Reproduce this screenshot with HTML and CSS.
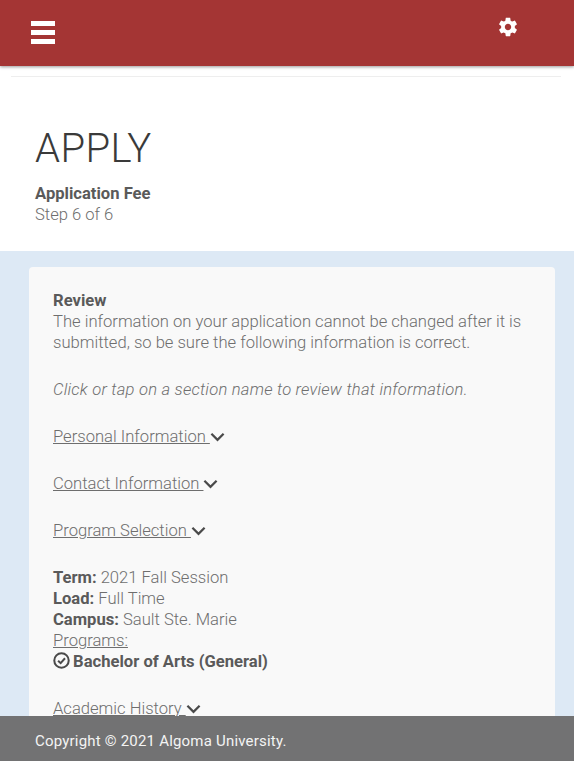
FILE: index.html
```html
<!DOCTYPE html>
<html lang="en">
<head>
    <meta charset="UTF-8">
    <meta name="viewport" content="width=device-width, initial-scale=1.0">
    <title>Apply - Application Fee</title>
    <link rel="stylesheet" href="styles.css">
</head>
<body>
    <header class="topbar">
        <a class="menu-btn" href="#" aria-label="Menu">
            <span></span><span></span><span></span>
        </a>
        <a class="settings-btn" href="#" aria-label="Settings">
            <svg viewBox="0 0 24 24" width="22" height="22"><path fill="#fff" d="M19.43 12.98c.04-.32.07-.64.07-.98s-.03-.66-.07-.98l2.11-1.65c.19-.15.24-.42.12-.64l-2-3.46c-.12-.22-.39-.3-.61-.22l-2.49 1c-.52-.4-1.08-.73-1.69-.98l-.38-2.65C14.46 2.18 14.25 2 14 2h-4c-.25 0-.46.18-.49.42l-.38 2.65c-.61.25-1.17.59-1.69.98l-2.49-1c-.23-.09-.49 0-.61.22l-2 3.46c-.13.22-.07.49.12.64l2.11 1.65c-.04.32-.07.65-.07.98s.03.66.07.98l-2.11 1.65c-.19.15-.24.42-.12.64l2 3.46c.12.22.39.3.61.22l2.49-1c.52.4 1.08.73 1.69.98l.38 2.65c.03.24.24.42.49.42h4c.25 0 .46-.18.49-.42l.38-2.65c.61-.25 1.17-.59 1.69-.98l2.49 1c.23.09.49 0 .61-.22l2-3.46c.12-.22.07-.49-.12-.64l-2.11-1.65zM12 15.5c-1.93 0-3.5-1.57-3.5-3.5s1.57-3.5 3.5-3.5 3.5 1.57 3.5 3.5-1.57 3.5-3.5 3.5z"/></svg>
        </a>
    </header>

    <div class="top-rule"></div>

    <section class="page-head">
        <h1>APPLY</h1>
        <div class="step-name">Application Fee</div>
        <div class="step-count">Step 6 of 6</div>
    </section>

    <main class="band">
        <div class="card">
            <p class="intro"><strong>Review</strong><br>The information on your application cannot be changed after it is submitted, so be sure the following information is correct.</p>
            <p><em>Click or tap on a section name to review that information.</em></p>

            <p><a class="section-link" href="#">Personal Information </a><svg class="chev" viewBox="0 0 16 10"><path d="M1.5 1.5 8 8l6.5-6.5"/></svg></p>
            <p><a class="section-link" href="#">Contact Information </a><svg class="chev" viewBox="0 0 16 10"><path d="M1.5 1.5 8 8l6.5-6.5"/></svg></p>
            <p><a class="section-link" href="#">Program Selection </a><svg class="chev" viewBox="0 0 16 10"><path d="M1.5 1.5 8 8l6.5-6.5"/></svg></p>

            <p>
                <strong>Term:</strong> 2021 Fall Session<br>
                <strong>Load:</strong> Full Time<br>
                <strong>Campus:</strong> Sault Ste. Marie<br>
                <u>Programs:</u><br>
                <svg class="check" viewBox="0 0 16 16"><circle cx="8" cy="8" r="6.8"/><path d="M4.8 8.2 7.2 10.5 11.3 5.9"/></svg>
                <strong>Bachelor of Arts (General)</strong>
            </p>

            <p><a class="section-link" href="#">Academic History </a><svg class="chev" viewBox="0 0 16 10"><path d="M1.5 1.5 8 8l6.5-6.5"/></svg></p>
        </div>
    </main>

    <footer class="footer">Copyright © 2021 Algoma University.</footer>
</body>
</html>
```

FILE: styles.css
```css
html, body {
    height: 761px;
    overflow: hidden;
}
body {
    margin: 0;
    font-family: Roboto, "Liberation Sans", sans-serif;
    font-size: 16.6px;
    font-weight: 300;
    line-height: 21px;
    color: #6e6e6e;
    background-color: #fff;
}
.topbar {
    display: flex;
    align-items: flex-start;
    justify-content: space-between;
    height: 66px;
    padding: 0 30px 0 31px;
    background-color: #a43534;
    box-shadow: 0 1px 3px rgba(0,0,0,0.4);
}
.menu-btn {
    display: flex;
    flex-direction: column;
    gap: 4px;
    width: 24px;
    margin-top: 21px;
}
.menu-btn span {
    height: 5px;
    background-color: #fff;
}
.settings-btn {
    display: block;
    height: 22px;
    margin-top: 16px;
    margin-right: 25px;
}
.top-rule {
    height: 1px;
    margin: 10px 13px 0 11px;
    background-color: #eee;
}
.page-head {
    height: 174px;
    padding-left: 35px;
}
.page-head h1 {
    margin: 0;
    padding-top: 48px;
    font-size: 40px;
    line-height: 48px;
    font-weight: 300;
    letter-spacing: 0.4px;
    color: #3a3a3a;
}
.step-name {
    margin-top: 10px;
    font-weight: 700;
    color: #5a5a5a;
}
.band {
    height: 494px;
    padding: 16px 19px 0 29px;
    overflow: hidden;
    background-color: #dde9f5;
}
.card {
    height: 600px;
    padding: 23px 23px 0 24px;
    background-color: #f9f9f9;
    border-radius: 4px;
}
.card p {
    margin: 0 0 26px;
}
.card strong {
    font-weight: 700;
    color: #5a5a5a;
}
.card em {
    letter-spacing: 0.22px;
}
.section-link {
    color: #6e6e6e;
}
.chev {
    width: 15px;
    height: 10px;
    fill: none;
    stroke: #4a4a4a;
    stroke-width: 2.4;
}
.check {
    width: 17px;
    height: 17px;
    margin-right: -1px;
    vertical-align: -2px;
    fill: none;
    stroke: #4a4a4a;
    stroke-width: 1.9;
}
.footer {
    position: fixed;
    left: 0;
    right: 0;
    bottom: 0;
    height: 45px;
    padding-left: 35px;
    line-height: 50px;
    font-size: 15px;
    letter-spacing: 0.2px;
    font-weight: 400;
    color: #f4f4f4;
    background-color: #727273;
}
```
